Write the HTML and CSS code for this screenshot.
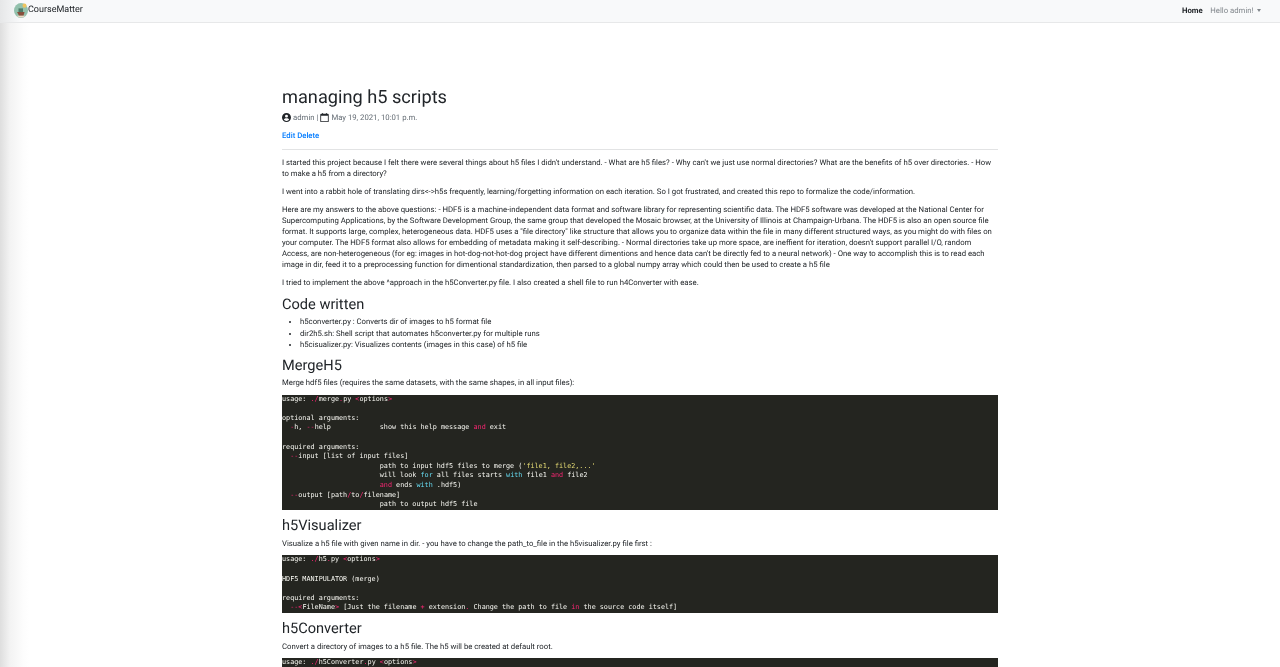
FILE: index.html
```html
<!DOCTYPE html>
<html lang="en">
<head>
<meta charset="utf-8">
<title>managing h5 scripts</title>
<link rel="stylesheet" href="styles.css">
</head>
<body>
<nav class="navbar">
  <a class="brand" href="#">
    <svg class="logo" viewBox="0 0 14 14" width="14" height="15" preserveAspectRatio="none" aria-hidden="true">
      <circle cx="7" cy="7" r="7" fill="#93c1ad"/>
      <circle cx="10.5" cy="2.5" r="2" fill="#eec35f"/>
      <path d="M3 8.500h7.500l-1 3.500H5z" fill="#8a4f3c"/>
      <path d="M4.500 5h4.500v3.500H4.500z" fill="#4d7c68"/>
      <path d="M2.500 11.800h9a7 7 0 0 1-9 0z" fill="#f0d9c8"/>
    </svg>CourseMatter</a>
  <div class="nav-links">
    <a class="nav-home" href="#">Home</a>
    <a class="nav-user" href="#">Hello admin!<span class="caret"></span></a>
  </div>
</nav>
<main class="article">
  <h1 class="title">managing h5 scripts</h1>
  <p class="meta">
    <svg class="icon" viewBox="0 0 16 16" aria-hidden="true"><path fill-rule="evenodd" d="M8 0a8 8 0 1 0 0 16A8 8 0 0 0 8 0zm0 3a2.6 2.6 0 1 1 0 5.2A2.6 2.6 0 0 1 8 3zM3.3 12c.8-1.7 2.6-2.6 4.7-2.6s3.900.9 4.700 2.600A6 6 0 0 1 8 14a6 6 0 0 1-4.700-2z"/></svg>
    <span>admin |</span>
    <svg class="icon" viewBox="0 0 16 16" aria-hidden="true"><path fill-rule="evenodd" d="M4 0h1.500v1.500h5V0H12v1.500h2A1.500 1.500 0 0 1 15.500 3v11.500A1.500 1.500 0 0 1 14 16H2a1.500 1.500 0 0 1-1.500-1.500V3A1.500 1.500 0 0 1 2 1.500h2zM2 5v9.500h12V5z"/></svg>
    <span>May 19, 2021, 10:01 p.m.</span>
  </p>
  <p class="actions"><a href="#">Edit</a> <a href="#">Delete</a></p>
  <hr class="rule">
  <p>I started this project because I felt there were several things about h5 files I didn't understand. - What are h5 files? - Why can't we just use normal directories? What are the benefits of h5 over directories. - How to make a h5 from a directory?</p>
  <p>I went into a rabbit hole of translating dirs&lt;-&gt;h5s frequently, learning/forgetting information on each iteration. So I got frustrated, and created this repo to formalize the code/information.</p>
  <p>Here are my answers to the above questions: - HDF5 is a machine-independent data format and software library for representing scientific data. The HDF5 software was developed at the National Center for Supercomputing Applications, by the Software Development Group, the same group that developed the Mosaic browser, at the University of Illinois at Champaign-Urbana. The HDF5 is also an open source file format. It supports large, complex, heterogeneous data. HDF5 uses a "file directory" like structure that allows you to organize data within the file in many different structured ways, as you might do with files on your computer. The HDF5 format also allows for embedding of metadata making it self-describing. - Normal directories take up more space, are ineffient for iteration, doesn't support parallel I/O, random Access, are non-heterogeneous (for eg: images in hot-dog-not-hot-dog project have different dimentions and hence data can't be directly fed to a neural network) - One way to accomplish this is to read each image in dir, feed it to a preprocessing function for dimentional standardization, then parsed to a global numpy array which could then be used to create a h5 file</p>
  <p>I tried to implement the above ^approach in the h5Converter.py file. I also created a shell file to run h4Converter with ease.</p>
  <h2>Code written</h2>
  <ul>
    <li>h5converter.py : Converts dir of images to h5 format file</li>
    <li>dir2h5.sh: Shell script that automates h5converter.py for multiple runs</li>
    <li>h5cisualizer.py: Visualizes contents (images in this case) of h5 file</li>
  </ul>
  <h2>MergeH5</h2>
  <p>Merge hdf5 files (requires the same datasets, with the same shapes, in all input files):</p>
<pre class="code">usage: <i>./</i>merge<i>.</i>py <i>&lt;</i>options<i>&gt;</i>

optional arguments:
  <i>-</i>h, <i>--</i>help            show this help message <i>and</i> exit

required arguments:
  <i>--</i>input [list of input files]
                        path to input hdf5 files to merge (<b>'file1, file2,...'</b>
                        will look <u>for</u> all files starts <u>with</u> file1 <i>and</i> file2
                        <i>and</i> ends <u>with</u> .hdf5)
  <i>--</i>output [path<i>/</i>to<i>/</i>filename]
                        path to output hdf5 file</pre>
  <h2>h5Visualizer</h2>
  <p>Visualize a h5 file with given name in dir. - you have to change the path_to_file in the h5visualizer.py file first :</p>
<pre class="code">usage: <i>./</i>h5<i>.</i>py <i>&lt;</i>options<i>&gt;</i>

HDF5 MANIPULATOR (merge)

required arguments:
  <i>--&lt;</i>FileName<i>&gt;</i> [Just the filename <i>+</i> extension<i>.</i> Change the path to file <i>in</i> the source code itself]</pre>
  <h2>h5Converter</h2>
  <p>Convert a directory of images to a h5 file. The h5 will be created at default root.</p>
<pre class="code">usage: <i>./</i>h5Converter<i>.</i>py <i>&lt;</i>options<i>&gt;</i>

required arguments:
  <i>--</i>input [path]</pre>
</main>
</body>
</html>
```

FILE: styles.css
```css
* { box-sizing: border-box; }
html, body { margin: 0; padding: 0; }
body {
  font-family: Roboto, "Liberation Sans", sans-serif;
  font-size: 7.760px;
  line-height: 11.100px;
  color: #212529;
  text-rendering: geometricPrecision;
  background: linear-gradient(to right, #dedede 0, #f3f3f3 10px, #fdfdfd 24px, #fff 30px);
}
a { text-decoration: none; color: #007bff; }
.navbar {
  height: 23px;
  display: flex;
  align-items: center;
  justify-content: space-between;
  padding: 0 14px 1px;
  background: linear-gradient(to right, #e6e7e8 0, #f8f9fa 20px);
  border-bottom: 1px solid #e7e8e9;
}
.brand { display: flex; align-items: center; color: #212529; font-size: 9px; will-change: transform; }
.logo { display: block; margin-bottom: 1px; }
.nav-links { display: flex; gap: 7.500px; padding-right: 5.400px; will-change: transform; }
.nav-home { color: #212529; font-weight: 700; }
.nav-user { color: #80868b; display: flex; align-items: center; }
.caret {
  margin-left: 3.500px;
  border-top: 3px solid #80868b;
  border-left: 2.500px solid transparent;
  border-right: 2.500px solid transparent;
}
.article { width: 716px; margin: 0 auto; padding-top: 64px; will-change: transform; }
.title { margin: 0 0 3px; font-size: 18.200px; font-weight: 400; line-height: 22.400px; }
.meta { margin: 0 0 6.400px; display: flex; align-items: center; gap: 2px; color: #646c74; }
.icon { width: 9px; height: 9px; fill: #212529; }
.actions { margin: 0 0 8px; font-weight: 500; }
.rule { margin: 0 0 6.600px; border: 0; border-top: 1px solid #e2e3e4; }
p { margin: 0 0 7px; }
h2 { margin: .5px 0 3px; font-size: 14.600px; line-height: 17.900px; font-weight: 400; }
ul { margin: 0 0 6.800px; padding: 0 0 0 18px; }
.code {
  margin: -.8px 0 7.300px;
  padding: 0;
  background: #242520;
  color: #f8f8f2;
  font-family: "DejaVu Sans Mono", "Liberation Mono", monospace;
  font-size: 6.770px;
  line-height: 9.600px;
  overflow: hidden;
}
.code i { font-style: normal; color: #f92672; }
.code b { font-weight: 400; color: #e6db74; }
.code u { text-decoration: none; color: #66d9ef; }
```
